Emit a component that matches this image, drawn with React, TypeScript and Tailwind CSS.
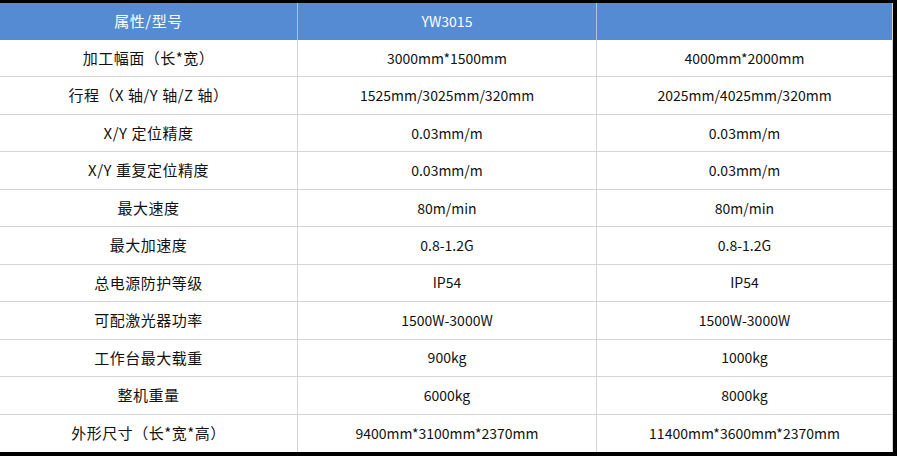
const rows: [string, string, string][] = [
  ["加工幅面（长*宽）", "3000mm*1500mm", "4000mm*2000mm"],
  ["行程（X 轴/Y 轴/Z 轴）", "1525mm/3025mm/320mm", "2025mm/4025mm/320mm"],
  ["X/Y 定位精度", "0.03mm/m", "0.03mm/m"],
  ["X/Y 重复定位精度", "0.03mm/m", "0.03mm/m"],
  ["最大速度", "80m/min", "80m/min"],
  ["最大加速度", "0.8-1.2G", "0.8-1.2G"],
  ["总电源防护等级", "IP54", "IP54"],
  ["可配激光器功率", "1500W-3000W", "1500W-3000W"],
  ["工作台最大载重", "900kg", "1000kg"],
  ["整机重量", "6000kg", "8000kg"],
  ["外形尺寸（长*宽*高）", "9400mm*3100mm*2370mm", "11400mm*3600mm*2370mm"],
];

const font = { fontFamily: '"Noto Sans CJK SC", "Liberation Sans", sans-serif' };

export default function App() {
  return (
    <div className="w-[897px] h-[456px] bg-black pt-[3px] pr-[4px] pb-[4px]" style={font}>
      <div className="h-full bg-white grid grid-cols-[298px_299px_1fr] grid-rows-[37px_repeat(11,1fr)] border-r border-[#d4d4d4]">
        {/* 表头 */}
        <div className="bg-[#558bd3] text-white text-[15px] tracking-[0.5px] flex items-center justify-center border-r border-[#a9c4ea]">
          属性/型号
        </div>
        <div className="bg-[#558bd3] text-white text-[14px] flex items-center justify-center border-r border-[#a9c4ea]">
          YW3015
        </div>
        <div className="bg-[#558bd3]" />

        {rows.map((r, i) => (
          <div key={i} className="contents">
            {r.map((cell, j) => (
              <div
                key={j}
                className={
                  "flex items-center justify-center text-[#111] border-b border-[#d4d4d4] " +
                  (j === 0 ? "text-[15px] tracking-[0.5px] " : "text-[14px] ") +
                  (j < 2 ? "border-r" : "") +
                  (i === rows.length - 1 ? " border-b-0" : "")
                }
              >
                {cell}
              </div>
            ))}
          </div>
        ))}
      </div>
    </div>
  );
}
